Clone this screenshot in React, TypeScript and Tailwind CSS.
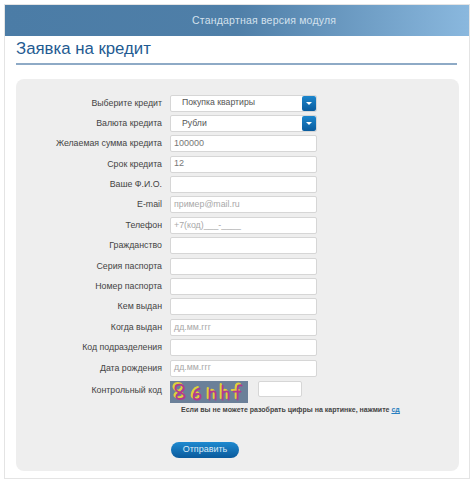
import React from 'react';

const rows = [
  { label: 'Выберите кредит', value: 'Покупка квартиры', select: true },
  { label: 'Валюта кредита', value: 'Рубли', select: true },
  { label: 'Желаемая сумма кредита', value: '100000' },
  { label: 'Срок кредита', value: '12' },
  { label: 'Ваше Ф.И.О.', value: '' },
  { label: 'E-mail', value: 'пример@mail.ru', hint: true },
  { label: 'Телефон', value: '+7(код)___-____', hint: true },
  { label: 'Гражданство', value: '' },
  { label: 'Серия паспорта', value: '' },
  { label: 'Номер паспорта', value: '' },
  { label: 'Кем выдан', value: '' },
  { label: 'Когда выдан', value: 'дд.мм.ггг', hint: true },
  { label: 'Код подразделения', value: '' },
  { label: 'Дата рождения', value: 'дд.мм.ггг', hint: true },
];

const glyphs = [
  'M7 10c-4-3-2-7 2-7s6 4 2 7-6 4-5 6 8 2 8-1-4-4-7-5',
  'M29 7c-4 1-6 5-6 8 0 4 7 4 7 0s-5-3-6-1',
  'M39 8v10M39 12c2-3 6-3 6 0v6',
  'M52 4v14M52 12c2-3 6-3 6 0v6',
  'M71 4c-2-1-4 0-4 3v11M63 10h7',
];

const Captcha = () => (
  <svg width="78" height="22" viewBox="0 0 78 22" className="block">
    <rect width="78" height="22" fill="#6b8099" />
    <g fill="none" strokeWidth="2.2" strokeLinecap="round" stroke="#e0cf3c" transform="translate(-1.2 -1)">
      {glyphs.map((d) => (
        <path key={d} d={d} />
      ))}
    </g>
    <g fill="none" strokeWidth="1.8" strokeLinecap="round" stroke="#b5388f" transform="translate(0.6 0.6)">
      {glyphs.map((d) => (
        <path key={d} d={d} />
      ))}
    </g>
  </svg>
);

export default function App() {
  return (
    <div className="w-[474px] h-[483px] bg-white p-1 font-['Liberation_Sans',Arial,sans-serif]">
      <div className="h-[475px] w-[466px] border border-[#e4e4e4] bg-white">
        <div className="h-[31px] bg-gradient-to-r from-[#4b7ca6] via-[#4f7fa8] to-[#8ab8de] pl-[187px] pt-[8px] text-[10.5px] leading-[15px] tracking-[0.2px] text-[#d3e1ed]">
          Стандартная версия модуля
        </div>

        <div className="mx-[11px] h-[29px] w-[441px] border-b-2 border-[#8eaac6] pt-[3px] text-[16.8px] leading-[20px] text-[#1f5b92]">
          Заявка на кредит
        </div>

        <div className="ml-[11px] mt-[14px] h-[392px] w-[443px] rounded-[8px] bg-[#eeeeee] pt-[15.5px]">
          <div className="flex flex-col gap-[3.4px]">
            {rows.map((row) => (
              <div key={row.label} className="flex h-[17px] items-center">
                <div className="w-[146px] text-right text-[8.8px] leading-[11px] text-[#444444]">{row.label}</div>
                <div className="relative ml-[8px] flex h-[17px] w-[147px] items-center rounded-[2px] border border-[#d6d6d6] bg-white">
                  <span
                    className={
                      row.select
                        ? 'pl-[11px] text-[8.7px] text-[#555555]'
                        : row.hint
                        ? 'pl-[3px] text-[8.8px] text-[#a8a8a8]'
                        : 'pl-[3px] text-[9px] text-[#777777]'
                    }
                  >
                    {row.value}
                  </span>
                  {row.select && (
                    <span className="absolute right-0 top-[0px] flex h-[15px] w-[14px] items-center justify-center rounded-[2px] bg-gradient-to-b from-[#1c86cc] to-[#0a5c9e]">
                      <span className="h-0 w-0 border-x-[3px] border-t-[3px] border-x-transparent border-t-white" />
                    </span>
                  )}
                </div>
              </div>
            ))}
          </div>

          <div className="mt-[4.4px] flex h-[22px] items-start">
            <div className="w-[146px] pt-[4px] text-right text-[8.8px] leading-[11px] text-[#444444]">Контрольный код</div>
            <div className="ml-[8px]">
              <Captcha />
            </div>
            <div className="ml-[10px] h-[16px] w-[44px] rounded-[2px] border border-[#d6d6d6] bg-white" />
          </div>

          <div className="mt-[2px] pl-[165px] text-[7px] leading-[10px] font-bold text-[#444444]">
            Если вы не можете разобрать цифры на картинке, нажмите <span className="text-[#2a7fc0] underline">сд</span>
          </div>

          <div className="ml-[155px] mt-[27px] flex h-[16px] w-[68px] items-center justify-center rounded-full bg-gradient-to-b from-[#1f8ad0] to-[#0a5a9c] text-[9px] text-[#dcebf6]">
            Отправить
          </div>
        </div>
      </div>
    </div>
  );
}
